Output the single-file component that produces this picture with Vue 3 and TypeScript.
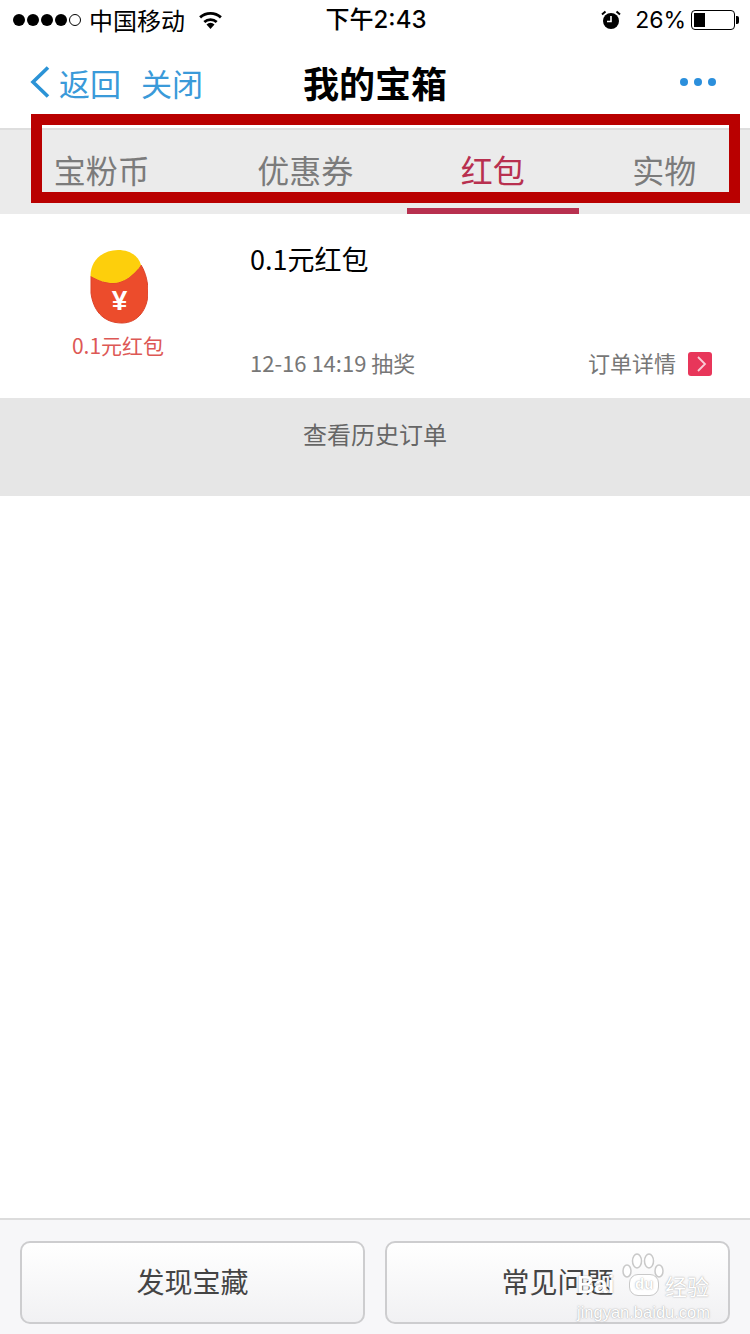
<template>
  <div class="page">
    <div class="status-bar">
      <div class="status-left">
        <span class="signal">
          <i v-for="n in 4" :key="n" class="dot"></i>
          <i class="dot dot--empty"></i>
        </span>
        <span class="carrier">中国移动</span>
        <svg class="wifi" width="25" height="18" viewBox="0 0 24 18">
          <path d="M12 18 8 13.4a6 6 0 0 1 8 0Z" fill="#000" />
          <path d="M5.8 11a9.4 9.4 0 0 1 12.4 0" fill="none" stroke="#000" stroke-width="2.8" />
          <path d="M1.6 6.4a15.600 15.600 0 0 1 20.800 0" fill="none" stroke="#000" stroke-width="2.8" />
        </svg>
      </div>
      <div class="status-time">下午2:43</div>
      <div class="status-right">
        <svg class="alarm" width="20" height="20" viewBox="0 0 20 20">
          <circle cx="10" cy="11" r="8" fill="#000" />
          <path d="M10 6v5.500H6" fill="none" stroke="#fff" stroke-width="1.600" />
          <path d="M1 4.500 4.500 1.500M19 4.500 15.500 1.500" stroke="#000" stroke-width="2" />
        </svg>
        <span class="battery-text">26%</span>
        <span class="battery"><span class="battery-fill"></span></span>
        <span class="battery-tip"></span>
      </div>
    </div>

    <div class="nav-bar">
      <div class="nav-left">
        <svg class="back-icon" width="20" height="32" viewBox="0 0 20 32">
          <path d="M18 1.500 3 16l15 14.500" fill="none" stroke="#2b93d6" stroke-width="3.600" />
        </svg>
        <span class="nav-link">返回</span>
        <span class="nav-link">关闭</span>
      </div>
      <div class="nav-title">我的宝箱</div>
      <div class="nav-more">
        <i></i><i></i><i></i>
      </div>
    </div>

    <div class="tabs">
      <div
        v-for="tab in tabs"
        :key="tab"
        class="tab"
        :class="{ 'tab--active': tab === activeTab }"
      >
        {{ tab }}
      </div>
    </div>

    <div class="order">
      <div class="order-prize">
        <svg class="packet" width="60" height="75" viewBox="0 0 60 75">
          <path d="M3 27C12 32 18 34 25 34 36 34 46 26 53 16 58 24 60 34 60 43 60 60 50 74 34 74 14 74 5 60 3 44Z" fill="#ec4c2c" stroke="#dc4229" stroke-width="1" />
          <path d="M2.500 27C2.500 11 15 1 30 1 41 1 50 6 53 16 46 26 36 34 25 34 18 34 12 32 2.500 27Z" fill="#fdcf0c" />
          <text x="31.500" y="61" class="packet-yen">¥</text>
        </svg>
        <div class="prize-name">0.1元红包</div>
      </div>
      <div class="order-main">
        <div class="order-title">0.1元红包</div>
        <div class="order-meta">
          <span class="order-date">12-16 14:19 抽奖</span>
          <span class="order-detail">
            订单详情
            <svg class="detail-icon" width="24" height="24" viewBox="0 0 24 24">
              <rect width="24" height="24" rx="3" fill="#e8365a" />
              <path d="M10 5 17 12l-7 7" fill="none" stroke="#f9cdd6" stroke-width="1.800" />
            </svg>
          </span>
        </div>
      </div>
    </div>

    <div class="history">查看历史订单</div>

    <div class="spacer"></div>

    <div class="footer">
      <div class="footer-btn">发现宝藏</div>
      <div class="footer-btn">常见问题</div>
    </div>

    <!-- annotation drawn on top of the screenshot -->
    <div class="highlight"></div>

    <div class="watermark">
      <svg class="paw" width="42" height="26" viewBox="0 0 42 26">
        <g fill="#fff" stroke="#c9c9c9" stroke-width="1.500">
          <ellipse cx="5" cy="18" rx="4" ry="6" />
          <ellipse cx="15" cy="8" rx="4.500" ry="7" />
          <ellipse cx="27" cy="8" rx="4.500" ry="7" />
          <ellipse cx="37" cy="18" rx="4" ry="6" />
        </g>
      </svg>
      <div class="wm-brand">
        <span class="wm-bai">Bai</span>
        <span class="wm-du">du</span>
        <span class="wm-jy">经验</span>
      </div>
      <div class="wm-url">jingyan.baidu.com</div>
    </div>
  </div>
</template>

<script setup lang="ts">
const tabs: string[] = ['宝粉币', '优惠券', '红包', '实物'];
const activeTab = '红包';
</script>

<style>
html,
body {
  margin: 0;
  background: #fff;
}
</style>

<style scoped>
.page {
  position: relative;
  display: flex;
  flex-direction: column;
  width: 750px;
  height: 1334px;
  overflow: hidden;
  background: #fff;
  font-family: "Noto Sans CJK SC", "Noto Sans", sans-serif;
  color: #000;
}

.status-bar {
  display: grid;
  grid-template-columns: 1fr auto 1fr;
  align-items: center;
  height: 40px;
  padding: 0 11px 0 13px;
  font-size: 24px;
  line-height: 40px;
}

.status-left,
.status-right {
  display: flex;
  align-items: center;
}

.status-right {
  justify-content: flex-end;
}

.signal {
  display: flex;
  gap: 2px;
  margin-right: 8px;
}

.dot {
  width: 12px;
  height: 12px;
  border-radius: 50%;
  background: #000;
}

.dot--empty {
  box-sizing: border-box;
  background: none;
  border: 1px solid #000;
}

.wifi {
  margin-left: 13px;
  margin-top: -1px;
}

.status-time {
  font-family: "Inter", "Noto Sans CJK SC", sans-serif;
  font-size: 24px;
  font-weight: 500;
}

.alarm {
  margin-right: 14px;
}

.battery-text {
  font-family: "Inter", sans-serif;
  font-size: 23px;
  margin-right: 5px;
}

.battery {
  box-sizing: border-box;
  display: flex;
  width: 44px;
  height: 20px;
  padding: 2px;
  border: 1.500px solid #000;
  border-radius: 4px;
}

.battery-fill {
  width: 11px;
  background: #000;
}

.battery-tip {
  width: 3px;
  height: 8px;
  margin-left: 1px;
  border-radius: 0 2px 2px 0;
  background: #000;
}

.nav-bar {
  display: grid;
  grid-template-columns: 1fr auto 1fr;
  align-items: center;
  height: 88px;
  padding: 0 30px 4px;
  box-sizing: border-box;
}

.nav-left {
  display: flex;
  align-items: center;
}

.back-icon {
  margin-right: 9px;
}

.nav-link {
  margin-right: 20px;
  font-size: 31px;
  color: #3a9ad9;
}

.nav-title {
  font-size: 36px;
  font-weight: 700;
}

.nav-more {
  display: flex;
  justify-self: end;
  gap: 6px;
  margin-right: 4px;
}

.nav-more i {
  width: 8px;
  height: 8px;
  border-radius: 50%;
  background: #2b8fdc;
}

.tabs {
  display: flex;
  height: 86px;
  background: #ebebeb;
  border-top: 2px solid #dedede;
  box-sizing: border-box;
}

.tab {
  flex: 1 1 auto;
  box-sizing: border-box;
  padding: 17px 0 0;
  font-size: 32px;
  line-height: 44px;
  text-align: center;
  color: #7b7b7b;
}

.tab--active {
  color: #b8304f;
  border-bottom: 6px solid #b8304f;
}

.order {
  display: flex;
  height: 184px;
}

.order-prize {
  display: flex;
  flex-direction: column;
  align-items: center;
  width: 236px;
  padding-top: 35px;
  box-sizing: border-box;
}

.packet-yen {
  font-family: "Liberation Sans", sans-serif;
  font-size: 28px;
  font-weight: 700;
  fill: #fff;
  text-anchor: middle;
}

.prize-name {
  margin-top: 4px;
  font-size: 21px;
  line-height: 34px;
  color: #dd5855;
}

.order-main {
  display: flex;
  flex: 1;
  flex-direction: column;
  justify-content: space-between;
  padding: 24px 38px 21px 14px;
}

.order-title {
  font-size: 27px;
  line-height: 42px;
}

.order-meta {
  display: flex;
  align-items: center;
  justify-content: space-between;
  font-size: 22px;
  line-height: 30px;
  color: #777;
}

.order-detail {
  display: flex;
  align-items: center;
  gap: 12px;
}

.detail-icon {
  margin-top: 4px;
}

.history {
  height: 98px;
  padding-top: 18px;
  box-sizing: border-box;
  background: #e6e6e6;
  font-size: 24px;
  line-height: 36px;
  text-align: center;
  color: #666;
}

.spacer {
  flex: 1;
}

.footer {
  display: flex;
  gap: 20px;
  height: 116px;
  padding: 21px 20px 10px;
  box-sizing: border-box;
  background: #f7f7f9;
  border-top: 2px solid #dcdcdc;
}

.footer-btn {
  display: flex;
  flex: 1;
  align-items: center;
  justify-content: center;
  padding-bottom: 3px;
  border: 2px solid #cdcdcf;
  border-radius: 10px;
  background: linear-gradient(#fff, #f1f1f3);
  font-size: 28px;
  color: #444;
}

.highlight {
  position: absolute;
  top: 114px;
  left: 31px;
  width: 709px;
  height: 89px;
  box-sizing: border-box;
  border: 11px solid #b90000;
}

.watermark {
  position: absolute;
  top: 1253px;
  left: 577px;
  width: 132px;
  color: #fff;
  text-shadow: 0 0 1.500px rgba(110, 110, 110, 0.75);
}

.paw {
  position: absolute;
  top: 0;
  left: 45px;
}

.wm-brand {
  display: flex;
  align-items: center;
  justify-content: space-between;
  height: 30px;
  margin-top: 17px;
}

.wm-bai {
  font-family: "Liberation Sans", sans-serif;
  font-size: 24px;
  font-weight: 700;
  line-height: 30px;
}

.wm-du {
  position: relative;
  width: 30px;
  height: 22px;
  margin-left: 9px;
  box-sizing: border-box;
  border: 1.500px solid #c9c9c9;
  border-radius: 9px;
  background: #fff;
  font-family: "Liberation Sans", sans-serif;
  font-size: 15px;
  font-weight: 700;
  line-height: 18px;
  text-align: center;
}

.wm-jy {
  font-size: 22px;
  line-height: 30px;
}

.wm-url {
  margin-top: 2px;
  font-family: "Liberation Sans", sans-serif;
  font-size: 16.500px;
  line-height: 20px;
  white-space: nowrap;
}
</style>
